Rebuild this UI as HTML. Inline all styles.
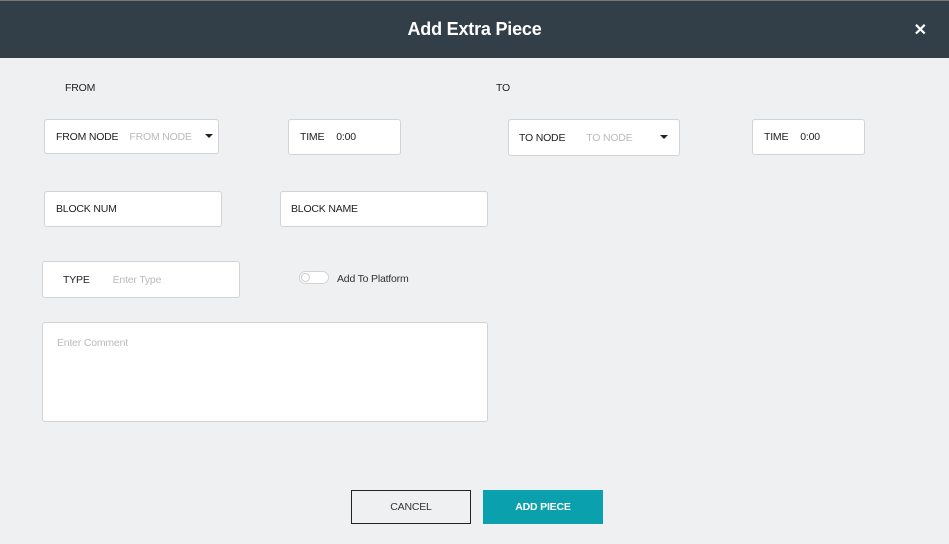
<!DOCTYPE html>
<html><head><style>
body{margin:0;width:949px;height:544px;background:#eff0f2;font-family:"Liberation Sans",sans-serif;position:relative;overflow:hidden;color:#222}
.hd{position:absolute;left:0;top:0;width:949px;height:57px;background:#333f48;border-top:1px solid #777}
.hd h1{margin:0;text-align:center;color:#fff;font-size:18px;font-weight:bold;line-height:57px;letter-spacing:-0.2px}
.x{position:absolute;right:22px;top:19px;color:#fff;font-size:16px;font-weight:bold}
.lbl{position:absolute;font-size:10.5px;letter-spacing:-0.2px}
.box{position:absolute;background:#fff;border:1px solid #d3d3d3;border-radius:3px;box-sizing:border-box;font-size:10.5px;letter-spacing:-0.2px;display:flex;align-items:center}
.box b{font-weight:normal;color:#222}
.ph{color:#bbb}
.tri{position:absolute;right:5px;top:14px;width:0;height:0;border-left:4px solid transparent;border-right:4px solid transparent;border-top:4px solid #222}
.btn{position:absolute;top:490px;width:120px;height:34px;box-sizing:border-box;font-size:10.5px;letter-spacing:-0.2px;display:flex;align-items:center;justify-content:center}
</style></head><body>
<div class="hd"><h1>Add Extra Piece</h1><div class="x">✕</div></div>
<div class="lbl" style="left:65px;top:82px">FROM</div>
<div class="lbl" style="left:496px;top:82px">TO</div>
<div class="box" style="left:44px;top:119px;width:175px;height:35px;padding-left:11px"><b>FROM NODE</b><span class="ph" style="margin-left:11px">FROM NODE</span><div class="tri"></div></div>
<div class="box" style="left:288px;top:119px;width:113px;height:36px;padding-left:11px"><b>TIME</b><span style="margin-left:12px">0:00</span></div>
<div class="box" style="left:508px;top:119px;width:172px;height:37px;padding-left:10px"><b>TO NODE</b><span class="ph" style="margin-left:21px">TO NODE</span><div class="tri" style="top:15px;right:11px"></div></div>
<div class="box" style="left:752px;top:119px;width:113px;height:36px;padding-left:11px"><b>TIME</b><span style="margin-left:12px">0:00</span></div>
<div class="box" style="left:44px;top:191px;width:178px;height:36px;padding-left:11px"><b>BLOCK NUM</b></div>
<div class="box" style="left:280px;top:191px;width:208px;height:36px;padding-left:10px"><b>BLOCK NAME</b></div>
<div class="box" style="left:42px;top:261px;width:198px;height:37px;padding-left:20px"><b>TYPE</b><span class="ph" style="margin-left:23px">Enter Type</span></div>
<div style="position:absolute;left:299px;top:271px;width:30px;height:13px;border:1px solid #d3d3d3;border-radius:8px;background:#fff;box-sizing:border-box"><div style="position:absolute;left:1px;top:1px;width:9px;height:9px;border-radius:50%;border:1px solid #ccc;box-sizing:border-box"></div></div>
<div class="lbl" style="left:337px;top:273px;color:#333">Add To Platform</div>
<div class="box" style="left:42px;top:322px;width:446px;height:100px;align-items:flex-start;padding:14px 0 0 14px"><span class="ph">Enter Comment</span></div>
<div class="btn" style="left:351px;border:1px solid #222;color:#333">CANCEL</div>
<div class="btn" style="left:483px;background:#0aa0ae;color:#fff;font-weight:bold">ADD PIECE</div>
</body></html>
